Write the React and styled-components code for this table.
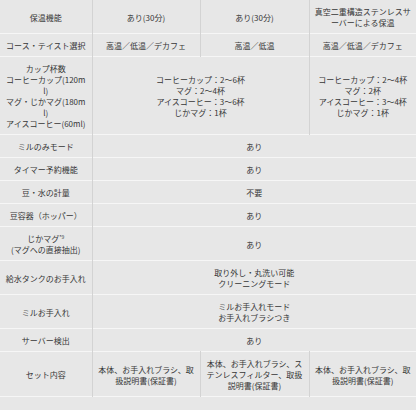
import * as React from 'react'
import styled, {createGlobalStyle} from 'styled-components'

const Global = createGlobalStyle`
  html, body {
    margin: 0;
    padding: 0;
    background: #e7e7e7;
  }
  body {
    font-family: "Noto Sans CJK JP", "Noto Sans", sans-serif;
    color: #363636;
  }
`

const Table = styled.table`
  width: 416px;
  table-layout: fixed;
  border-collapse: collapse;
  background: #e7e7e7;
  font-size: 8px;
  line-height: 11px;
`

const Col = styled.col`
  width: ${p => (p.$w ? `${p.$w}px` : 'auto')};
`

const Row = styled.tr`
  border-bottom: 1px solid #f6f6f6;
`

const Label = styled.th`
  font-weight: normal;
  text-align: center;
  vertical-align: middle;
  padding: 6px 5px 5px;
  border-right: 1px solid #d3d3d3;
  word-break: break-all;
`

const Cell = styled.td`
  text-align: center;
  vertical-align: middle;
  padding: 6px 5px 5px;
  border-right: 1px solid #d3d3d3;
  word-break: break-all;
  &:last-child {
    border-right: none;
  }
`

const Note = styled.sup`
  font-size: 5px;
  line-height: 0;
  vertical-align: 3px;
`

const Lines = ({items}) =>
  items.map((t, i) => (
    <React.Fragment key={i}>
      {i > 0 && <br />}
      {t}
    </React.Fragment>
  ))

// cells: [lines, colSpan]
const rows = [
  {label: ['保温機能'], cells: [[['あり(30分)']], [['あり(30分)']], [['真空二重構造ステンレスサーバーによる保温']]]},
  {label: ['コース・テイスト選択'], cells: [[['高温／低温／デカフェ']], [['高温／低温']], [['高温／低温／デカフェ']]]},
  {
    label: ['カップ杯数', 'コーヒーカップ(120ml)', 'マグ・じかマグ(180ml)', 'アイスコーヒー(60ml)'],
    cells: [
      [['コーヒーカップ：2〜6杯', 'マグ：2〜4杯', 'アイスコーヒー：3〜6杯', 'じかマグ：1杯'], 2],
      [['コーヒーカップ：2〜4杯', 'マグ：2杯', 'アイスコーヒー：3〜4杯', 'じかマグ：1杯']],
    ],
  },
  {label: ['ミルのみモード'], cells: [[['あり'], 3]]},
  {label: ['タイマー予約機能'], cells: [[['あり'], 3]]},
  {label: ['豆・水の計量'], cells: [[['不要'], 3]]},
  {label: ['豆容器（ホッパー）'], cells: [[['あり'], 3]]},
  {label: null, mug: true, cells: [[['あり'], 3]]},
  {label: ['給水タンクのお手入れ'], cells: [[['取り外し・丸洗い可能', 'クリーニングモード'], 3]]},
  {label: ['ミルお手入れ'], cells: [[['ミルお手入れモード', 'お手入れブラシつき'], 3]]},
  {label: ['サーバー検出'], cells: [[['あり'], 3]]},
  {
    label: ['セット内容'],
    cells: [
      [['本体、お手入れブラシ、取扱説明書(保証書)']],
      [['本体、お手入れブラシ、ステンレスフィルター、取扱説明書(保証書)']],
      [['本体、お手入れブラシ、取扱説明書(保証書)']],
    ],
  },
]

export default function App() {
  return (
    <>
      <Global />
      <Table>
        <colgroup>
          <Col $w={92} />
          <Col $w={108} />
          <Col $w={109} />
          <Col />
        </colgroup>
        <tbody>
          {rows.map((r, i) => (
            <Row key={i}>
              <Label>
                {r.mug ? (
                  <>
                    じかマグ<Note>*9</Note>
                    <br />
                    (マグへの直接抽出)
                  </>
                ) : (
                  <Lines items={r.label} />
                )}
              </Label>
              {r.cells.map(([lines, span], j) => (
                <Cell key={j} colSpan={span || 1}>
                  <Lines items={lines} />
                </Cell>
              ))}
            </Row>
          ))}
        </tbody>
      </Table>
    </>
  )
}
